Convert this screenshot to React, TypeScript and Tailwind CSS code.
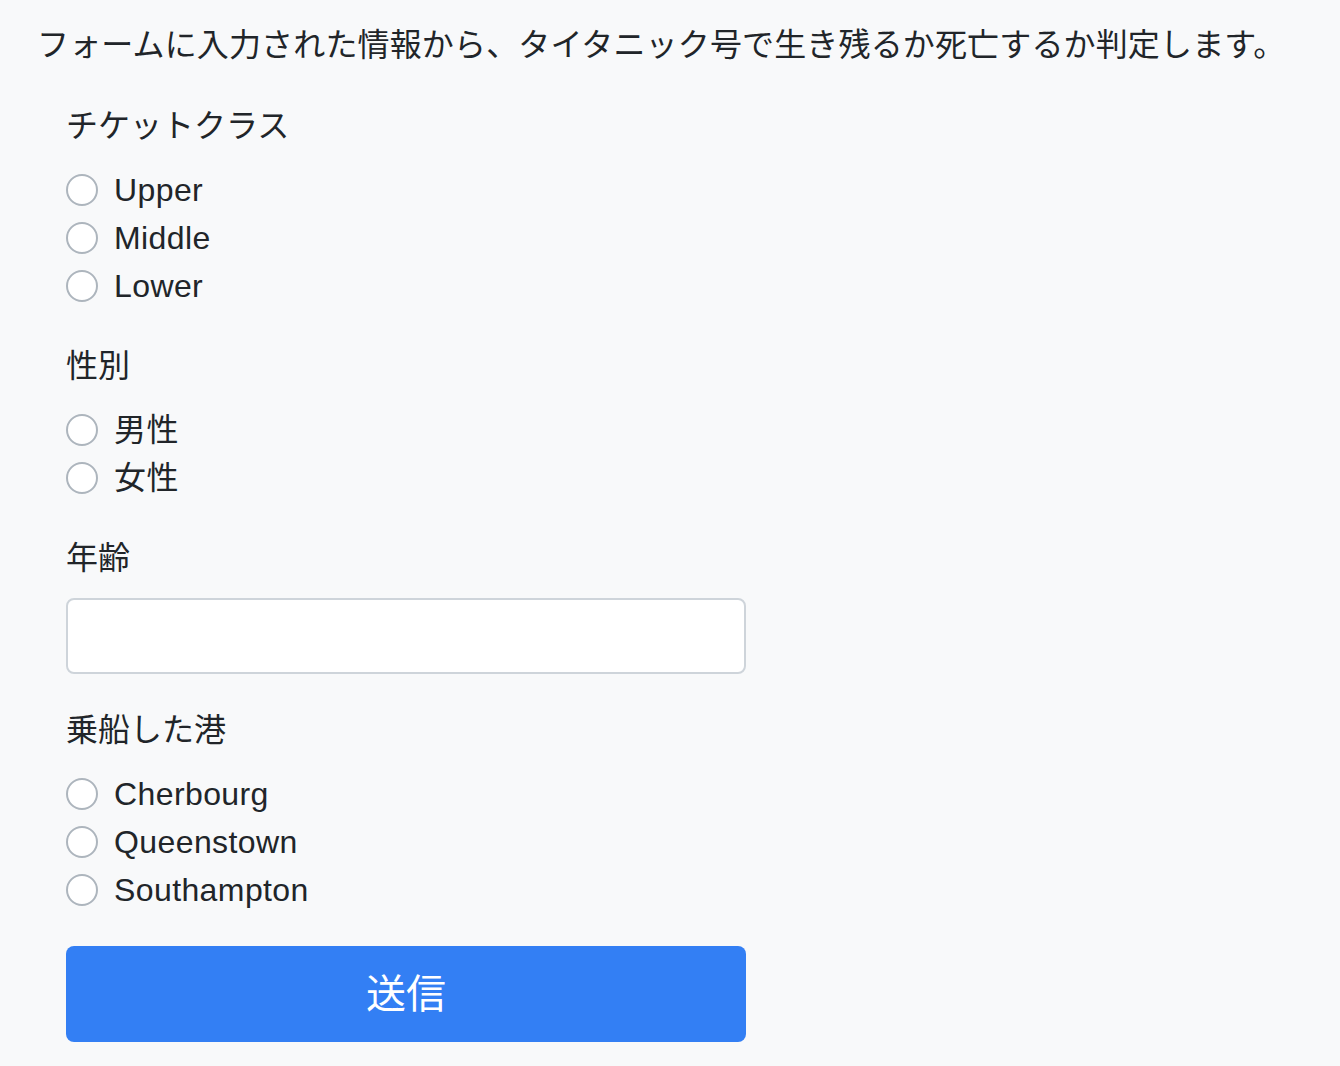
import React from "react";

const font = {
  fontFamily: '"Liberation Sans", "Noto Sans CJK JP", sans-serif',
};

function Radio({ name, label }: { name: string; label: string }) {
  return (
    <label className="flex items-center h-12 cursor-pointer">
      <input
        type="radio"
        name={name}
        className="appearance-none w-8 h-8 rounded-full border-2 border-[#adb5bd] bg-white shrink-0 m-0"
      />
      <span className="ml-4 text-[32px] leading-[48px] tracking-[0.4px] text-[#212529]">{label}</span>
    </label>
  );
}

function Group({ title, name, options }: { title: string; name: string; options: string[] }) {
  return (
    <div className="flex flex-col">
      <div className="text-[32px] leading-[48px] text-[#212529]">{title}</div>
      <div className="flex flex-col mt-4">
        {options.map((o) => (
          <Radio key={o} name={name} label={o} />
        ))}
      </div>
    </div>
  );
}

export default function App() {
  return (
    <div className="min-h-[1066px] bg-[#f8f9fa] pt-[21px] pl-[37px]" style={font}>
      <h1 className="text-[32px] leading-[48px] font-normal text-[#212529] tracking-[0.15px]">
        フォームに入力された情報から、タイタニック号で生き残るか死亡するか判定します。
      </h1>
      <form className="ml-[29px] mt-[33px] w-[680px] flex flex-col gap-8" onSubmit={(e) => e.preventDefault()}>
        <Group title="チケットクラス" name="pclass" options={["Upper", "Middle", "Lower"]} />
        <Group title="性別" name="sex" options={["男性", "女性"]} />
        <div className="flex flex-col">
          <div className="text-[32px] leading-[48px] text-[#212529]">年齢</div>
          <input
            type="text"
            className="mt-4 h-[76px] w-full rounded-lg border-2 border-[#ced4da] bg-white px-6 text-[32px] outline-none"
          />
        </div>
        <Group title="乗船した港" name="embarked" options={["Cherbourg", "Queenstown", "Southampton"]} />
        <button
          type="submit"
          className="h-24 w-full rounded-lg bg-[#337ff4] text-white text-[40px] leading-[60px]"
        >
          送信
        </button>
      </form>
    </div>
  );
}
